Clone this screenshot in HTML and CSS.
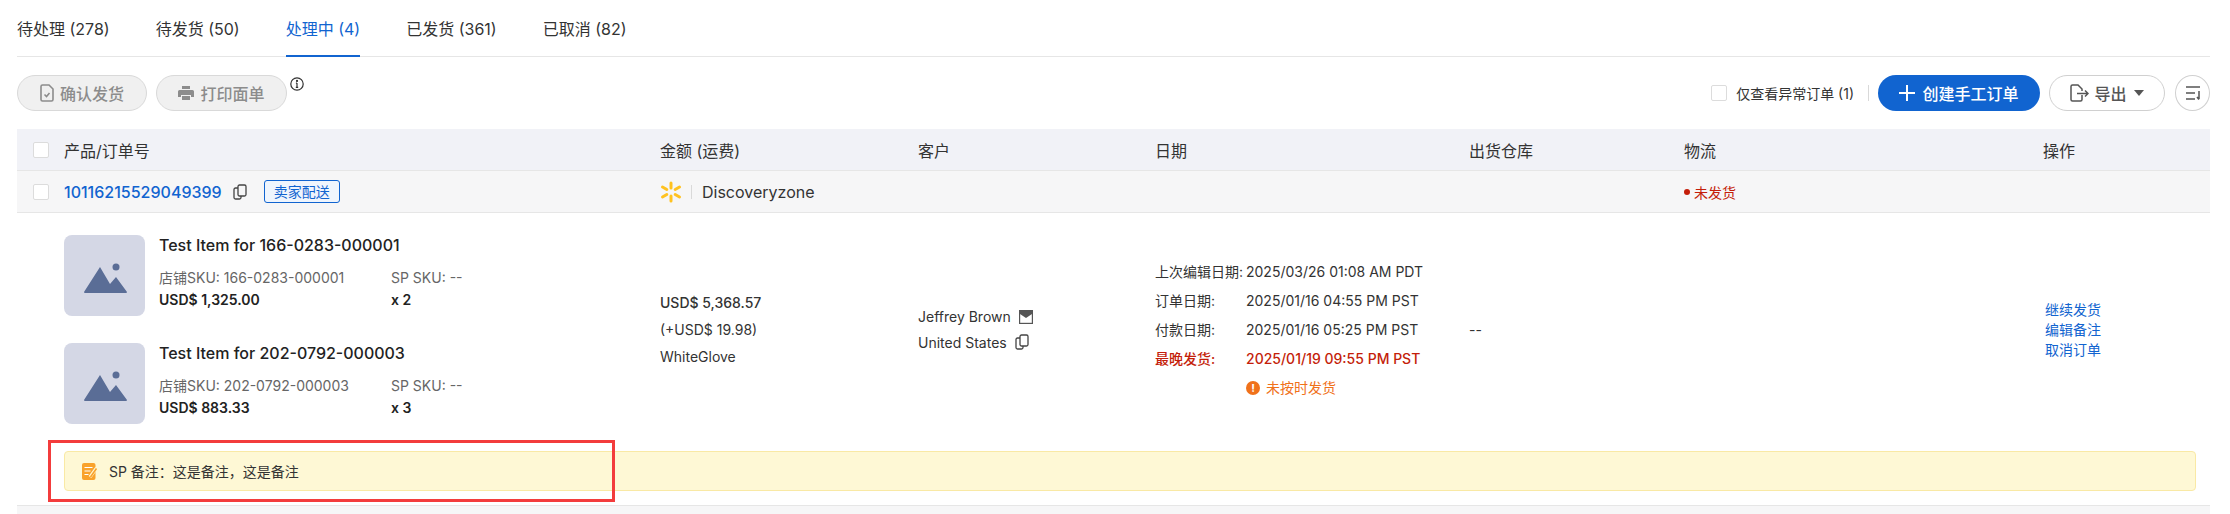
FILE: index.html
```html
<!DOCTYPE html>
<html lang="zh-CN">
<head>
    <meta charset="UTF-8">
    <title>订单列表</title>
    <link rel="stylesheet" href="styles.css">
</head>
<body>
    <div class="page">
        <div class="tabs">
            <a class="tab">待处理 (278)</a>
            <a class="tab">待发货 (50)</a>
            <a class="tab active">处理中 (4)</a>
            <a class="tab">已发货 (361)</a>
            <a class="tab">已取消 (82)</a>
        </div>

        <div class="toolbar">
            <div class="toolbar-left">
                <button class="btn btn-disabled btn-confirm">
                    <svg width="14" height="18" viewBox="0 0 14 18" fill="none" stroke="#8c8c8c" stroke-width="1.6"><path d="M1 2.5A1.5 1.5 0 0 1 2.500 1H9l4 4v10.500a1.500 1.500 0 0 1-1.500 1.500h-9A1.500 1.500 0 0 1 1 15.500z"/><path d="M4.500 10.500l2 2 3-3.500"/></svg>
                    确认发货
                </button>
                <button class="btn btn-disabled btn-print">
                    <svg width="16" height="16" viewBox="0 0 16 16" fill="#8c8c8c"><path d="M4 1h8v3H4zM1.500 5h13A1.500 1.500 0 0 1 16 6.500V12h-3v-2H3v2H0V6.500A1.500 1.500 0 0 1 1.500 5zM4 11h8v4H4z"/></svg>
                    打印面单
                </button>
                <svg class="info-icon" width="14" height="14" viewBox="0 0 14 14" fill="none" stroke="#333" stroke-width="1.200"><circle cx="7" cy="7" r="6.200"/><path d="M7 6v4.200M5.800 10.300h2.400M5.900 6.100H7"/><circle cx="7" cy="3.900" r=".5" fill="#333"/></svg>
            </div>
            <div class="toolbar-right">
                <label class="check-label"><span class="checkbox"></span>仅查看异常订单 (1)</label>
                <span class="toolbar-sep"></span>
                <button class="btn btn-primary">
                    <svg width="16" height="16" viewBox="0 0 16 16" stroke="#fff" stroke-width="2"><path d="M8 0v16M0 8h16"/></svg>
                    创建手工订单
                </button>
                <button class="btn btn-outline">
                    <svg width="19" height="18" viewBox="0 0 19 18" fill="none" stroke="#555" stroke-width="1.500"><path d="M12 11v4.500a1.500 1.500 0 0 1-1.500 1.500h-8A1.500 1.500 0 0 1 1 15.500v-13A1.500 1.500 0 0 1 2.500 1H8l4 4v2"/><path d="M7 9.500h11M15 6.500l3 3-3 3"/></svg>
                    导出
                    <span class="caret"></span>
                </button>
                <button class="btn-round">
                    <svg width="16" height="16" viewBox="0 0 16 16" fill="none" stroke="#555" stroke-width="1.500"><path d="M1 2h14M1 8h9M1 14h9M14 6v8M12 12l2 2.500"/></svg>
                </button>
            </div>
        </div>

        <div class="cols table-head">
            <div class="cell-first"><span class="checkbox"></span>产品/订单号</div>
            <div>金额 (运费)</div>
            <div>客户</div>
            <div>日期</div>
            <div>出货仓库</div>
            <div>物流</div>
            <div>操作</div>
        </div>

        <div class="cols order-head">
            <div class="cell-first">
                <span class="checkbox"></span>
                <a class="order-no">10116215529049399</a>
                <svg class="copy-icon" width="14" height="16" viewBox="0 0 14 16" fill="none" stroke="#444" stroke-width="1.300"><rect x="5" y="1" width="8" height="11" rx="1.500"/><path d="M5 4H2.500A1.500 1.500 0 0 0 1 5.500v8A1.500 1.500 0 0 0 2.500 15h4A1.500 1.500 0 0 0 8 13.500V12"/></svg>
                <span class="tag">卖家配送</span>
            </div>
            <div class="shop">
                <svg width="22" height="22" viewBox="0 0 22 22" stroke="#ffc220" stroke-width="3" stroke-linecap="round"><path d="M11 2v5M11 15v5M2.500 6l4.300 2.500M15.200 13.500l4.300 2.500M2.500 16l4.300-2.500M15.200 8.500l4.300-2.500"/></svg>
                <span class="shop-sep"></span>
                Discoveryzone
            </div>
            <div></div>
            <div></div>
            <div></div>
            <div class="ship-state"><span class="dot"></span>未发货</div>
            <div></div>
        </div>

        <div class="order-body">
            <div class="cols order-main">
                <div class="products">
                    <div class="product">
                        <div class="thumb">
                            <svg width="43" height="30" viewBox="0 0 43 30" fill="#5a6d96"><circle cx="32" cy="4" r="3.500"/><path d="M0 29L16 4l10 17 6-7 11 15a1 1 0 0 1-1 1H1a1 1 0 0 1-1-1z"/></svg>
                        </div>
                        <div class="product-info">
                            <div class="product-title">Test Item for 166-0283-000001</div>
                            <div class="sku-row">
                                <span class="sku-main">店铺SKU: 166-0283-000001</span>
                                <span>SP SKU: --</span>
                            </div>
                            <div class="sku-row strong">
                                <span class="sku-main">USD$ 1,325.00</span>
                                <span>x 2</span>
                            </div>
                        </div>
                    </div>
                    <div class="product">
                        <div class="thumb">
                            <svg width="43" height="30" viewBox="0 0 43 30" fill="#5a6d96"><circle cx="32" cy="4" r="3.500"/><path d="M0 29L16 4l10 17 6-7 11 15a1 1 0 0 1-1 1H1a1 1 0 0 1-1-1z"/></svg>
                        </div>
                        <div class="product-info">
                            <div class="product-title">Test Item for 202-0792-000003</div>
                            <div class="sku-row">
                                <span class="sku-main">店铺SKU: 202-0792-000003</span>
                                <span>SP SKU: --</span>
                            </div>
                            <div class="sku-row strong">
                                <span class="sku-main">USD$ 883.33</span>
                                <span>x 3</span>
                            </div>
                        </div>
                    </div>
                </div>

                <div class="amount">
                    <div class="amount-total">USD$ 5,368.57</div>
                    <div>(+USD$ 19.98)</div>
                    <div>WhiteGlove</div>
                </div>

                <div class="customer">
                    <div>Jeffrey Brown
                        <svg width="14" height="14" viewBox="0 0 14 14"><rect x=".6" y=".6" width="12.800" height="12.800" fill="none" stroke="#555" stroke-width="1.200"/><path d="M1 1h12v3L7 8 1 4z" fill="#555"/></svg>
                    </div>
                    <div>United States
                        <svg width="14" height="16" viewBox="0 0 14 16" fill="none" stroke="#444" stroke-width="1.300"><rect x="5" y="1" width="8" height="11" rx="1.500"/><path d="M5 4H2.500A1.500 1.500 0 0 0 1 5.500v8A1.500 1.500 0 0 0 2.500 15h4A1.500 1.500 0 0 0 8 13.500V12"/></svg>
                    </div>
                </div>

                <div class="dates">
                    <div class="date-row"><span class="date-label">上次编辑日期:</span><span>2025/03/26 01:08 AM PDT</span></div>
                    <div class="date-row"><span class="date-label">订单日期:</span><span>2025/01/16 04:55 PM PST</span></div>
                    <div class="date-row"><span class="date-label">付款日期:</span><span>2025/01/16 05:25 PM PST</span></div>
                    <div class="date-row late"><span class="date-label">最晚发货:</span><span>2025/01/19 09:55 PM PST</span></div>
                    <div class="date-row warn"><span class="date-label"></span>
                        <span class="warn-text"><span class="warn-icon">!</span>未按时发货</span>
                    </div>
                </div>

                <div class="warehouse">--</div>
                <div></div>

                <div class="actions">
                    <a>继续发货</a>
                    <a>编辑备注</a>
                    <a>取消订单</a>
                </div>
            </div>

            <div class="note">
                <svg width="16" height="17" viewBox="0 0 16 17"><rect width="13.500" height="17" rx="2" fill="#f9a22b"/><path d="M2.500 4.500h8M2.500 8h6M2.500 11.500h4" stroke="#fff" stroke-width="1.200"/><path d="M8 14l6.500-9" stroke="#fef8d5" stroke-width="3.200"/><path d="M8.500 14l6-8.500" stroke="#f9a22b" stroke-width="1.600"/></svg>
                SP 备注：这是备注，这是备注
            </div>
            <div class="highlight-box"></div>
        </div>

        <div class="next-row"></div>
    </div>
</body>
</html>
```

FILE: styles.css
```css
* {
    margin: 0;
    padding: 0;
    box-sizing: border-box;
}

html, body {
    height: 514px;
    overflow: hidden;
    background: white;
}

body {
    font-family: Inter, "Noto Sans CJK SC", sans-serif;
    font-size: 14px;
    color: #333;
}

.page {
    width: 2193px;
    margin-left: 17px;
}

/* tabs */
.tabs {
    display: flex;
    height: 57px;
    border-bottom: 1px solid #e6e6e6;
}

.tab {
    font-size: 16px;
    line-height: 24px;
    padding-top: 17px;
    margin-right: 46px;
    height: 57px;
    white-space: nowrap;
}

.tab.active {
    color: #1164d0;
    border-bottom: 2px solid #1164d0;
}

/* toolbar */
.toolbar {
    display: flex;
    justify-content: space-between;
    margin-top: 18px;
    height: 36px;
    margin-bottom: 18px;
}

.toolbar-left, .toolbar-right {
    display: flex;
    align-items: center;
}

.btn {
    display: flex;
    align-items: center;
    justify-content: center;
    height: 36px;
    border-radius: 18px;
    font-family: inherit;
    font-size: 16px;
    font-weight: 500;
    white-space: nowrap;
    cursor: pointer;
}

.btn-disabled {
    background: #f0f0f0;
    border: 1px solid #d9d9d9;
    color: #8c8c8c;
    gap: 6px;
}

.btn-confirm {
    width: 130px;
    margin-right: 9px;
}

.btn-print {
    width: 131px;
}

.info-icon {
    align-self: flex-start;
    margin: 2px 0 0 3px;
}

.checkbox {
    display: inline-block;
    flex: none;
    width: 16px;
    height: 16px;
    background: white;
    border: 1px solid #dcdcdc;
    border-radius: 2px;
}

.check-label {
    display: flex;
    align-items: center;
    gap: 9px;
    white-space: nowrap;
}

.toolbar-sep {
    width: 1px;
    height: 16px;
    background: #d9d9d9;
    margin: 0 9px 0 14px;
}

.btn-primary {
    width: 162px;
    gap: 7px;
    background: #1164d0;
    border: none;
    color: white;
    margin-right: 9px;
}

.btn-outline {
    width: 116px;
    gap: 5px;
    background: white;
    border: 1px solid #d0d0d0;
    color: #555;
    margin-right: 10px;
}

.caret {
    width: 0;
    height: 0;
    margin-left: 2px;
    border-left: 5px solid transparent;
    border-right: 5px solid transparent;
    border-top: 6px solid #555;
}

.btn-round {
    display: flex;
    align-items: center;
    justify-content: center;
    width: 35px;
    height: 36px;
    background: white;
    border: 1px solid #d0d0d0;
    border-radius: 50%;
}

/* table */
.cols {
    display: grid;
    grid-template-columns: 643px 258px 237px 314px 215px 359px 167px;
    align-items: center;
}

.table-head {
    height: 42px;
    background: #f1f2f7;
    border-bottom: 1px solid #e6e6e6;
    font-size: 16px;
}

.order-head {
    height: 42px;
    background: #f6f6f7;
    border-bottom: 1px solid #e6e6e6;
}

.cell-first {
    display: flex;
    align-items: center;
    padding-left: 16px;
}

.cell-first .checkbox {
    margin-right: 15px;
}

.order-no {
    color: #1164d0;
    font-size: 16px;
    font-weight: 500;
}

.copy-icon {
    margin-left: 11px;
}

.tag {
    margin-left: 17px;
    padding: 0 9px;
    height: 23px;
    line-height: 21px;
    color: #1164d0;
    background: #eff5fd;
    border: 1px solid #1164d0;
    border-radius: 3px;
}

.shop {
    display: flex;
    align-items: center;
    font-size: 16px;
}

.shop-sep {
    width: 1px;
    height: 14px;
    background: #d9d9d9;
    margin: 0 10px 0 9px;
}

.ship-state {
    display: flex;
    align-items: center;
    gap: 4px;
    color: #c41e0a;
}

.dot {
    width: 6px;
    height: 6px;
    border-radius: 50%;
    background: #c41e0a;
}

/* order body */
.order-body {
    position: relative;
    padding: 22px 14px 14px 0;
}

.order-main {
    grid-template-columns: 643px 258px 237px 314px 215px 359px 153px;
}

.products {
    display: flex;
    flex-direction: column;
    gap: 27px;
    padding-left: 47px;
}

.product {
    display: flex;
    gap: 14px;
}

.thumb {
    display: flex;
    align-items: center;
    justify-content: center;
    width: 81px;
    height: 81px;
    padding: 5px 0 0 1px;
    background: #d4d7e5;
    border-radius: 8px;
}

.product-title {
    font-size: 16px;
    font-weight: 500;
    line-height: 20px;
    color: #222;
    margin-bottom: 12px;
}

.sku-row {
    display: flex;
    line-height: 22px;
    color: #666;
}

.sku-main {
    width: 232px;
}

.sku-row.strong {
    color: #222;
    font-weight: 600;
}

.amount {
    display: flex;
    flex-direction: column;
    gap: 7px;
    line-height: 20px;
}

.amount-total {
    font-weight: 500;
}

.customer {
    display: flex;
    flex-direction: column;
    gap: 6px;
    line-height: 20px;
}

.customer svg {
    vertical-align: -2px;
    margin-left: 4px;
}

.dates {
    display: flex;
    flex-direction: column;
    gap: 9px;
}

.date-row {
    display: flex;
    line-height: 20px;
    white-space: nowrap;
}

.date-label {
    width: 91px;
    flex: none;
}

.late {
    color: #c41e0a;
    font-weight: 500;
}

.warn-text {
    display: flex;
    align-items: center;
    gap: 6px;
    color: #f0711a;
}

.warn-icon {
    width: 14px;
    height: 14px;
    border-radius: 50%;
    background: #f0711a;
    color: white;
    font-size: 11px;
    font-weight: 700;
    line-height: 14px;
    text-align: center;
}

.actions {
    display: flex;
    flex-direction: column;
    line-height: 20px;
    color: #1164d0;
    padding-left: 2px;
}

.note {
    display: flex;
    align-items: center;
    gap: 11px;
    height: 40px;
    margin: 27px 0 0 47px;
    padding-left: 17px;
    background: #fef8d5;
    border: 1px solid #f9e9a5;
    border-radius: 4px;
}

.highlight-box {
    position: absolute;
    left: 31px;
    top: 227px;
    width: 567px;
    height: 62px;
    border: 3px solid #f33c3c;
}

.next-row {
    height: 20px;
    background: #f6f6f7;
    border-top: 1px solid #e6e6e6;
}
```
